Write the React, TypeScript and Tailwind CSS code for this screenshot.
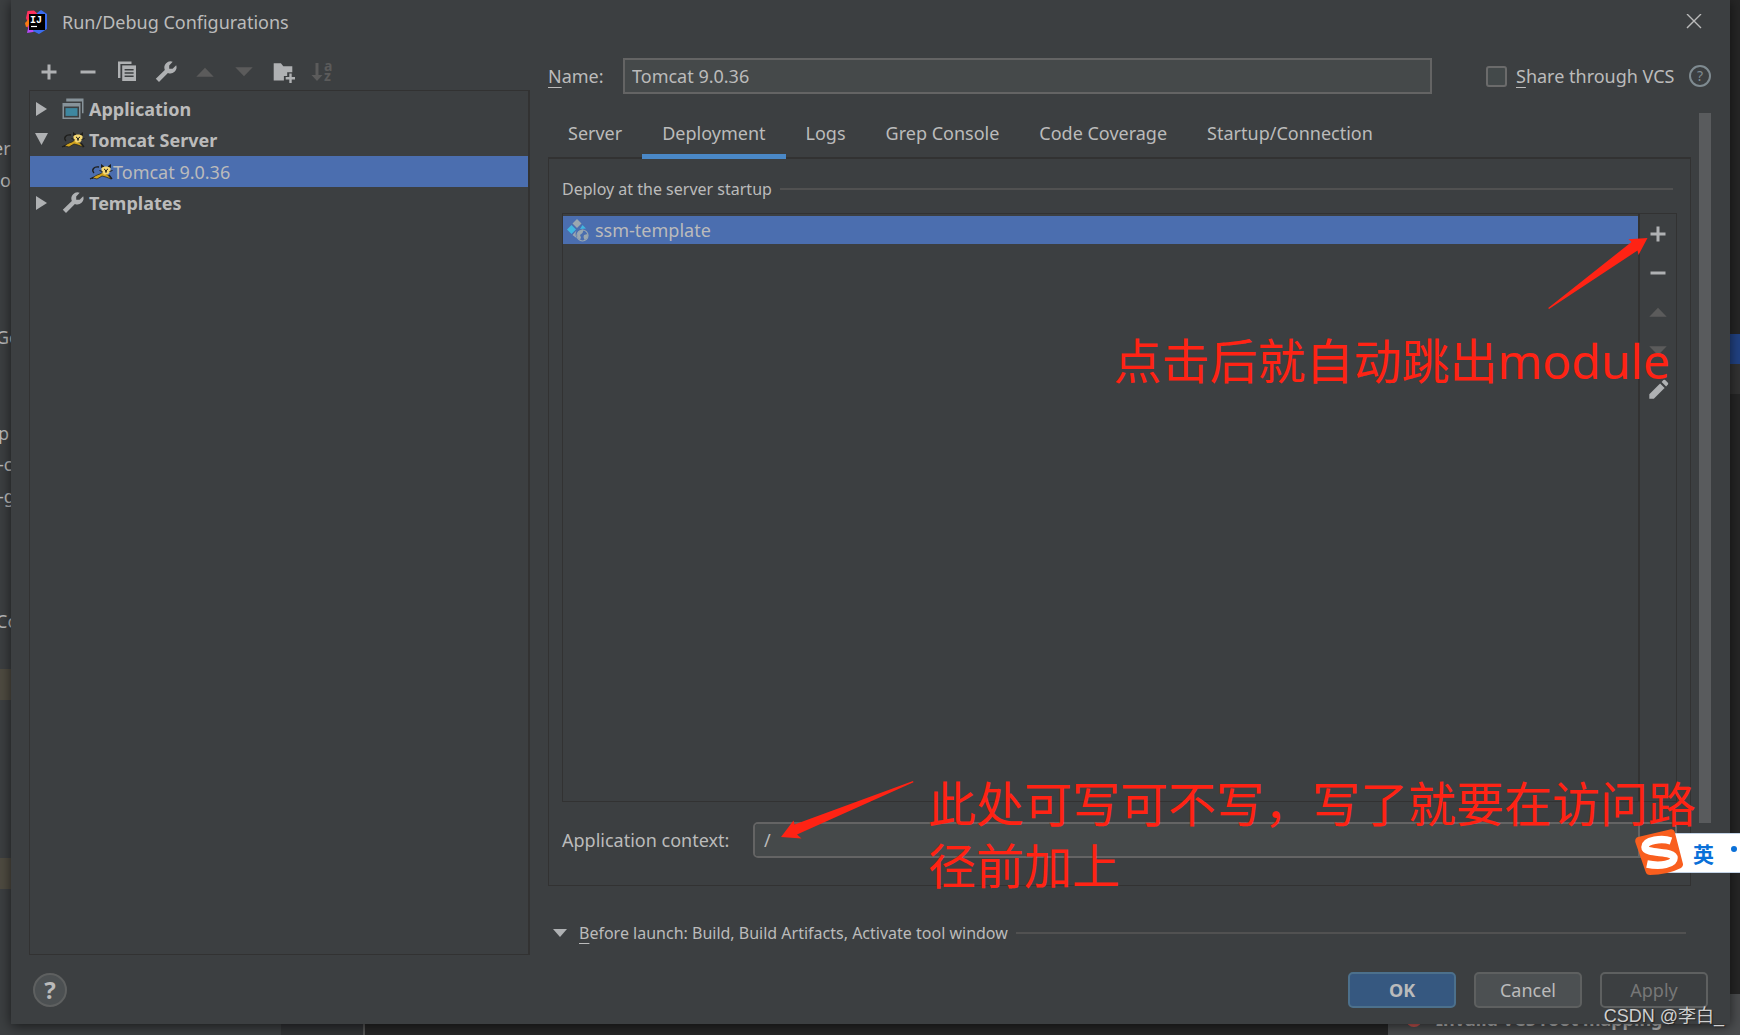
import React from 'react';

type IconProps = { className?: string };

const Plus = () => (
  <svg viewBox="0 0 16 16" className="size-6 fill-[#afb1b3]"><path d="M7 3h2v4h4v2H9v4H7V9H3V7h4z" /></svg>
);

const Minus = () => (
  <svg viewBox="0 0 16 16" className="size-6 fill-[#afb1b3]"><path d="M3 7h10v2H3z" /></svg>
);

const Up = () => (
  <svg viewBox="0 0 16 16" className="size-6 fill-[#5b5b5b]"><path d="M8 5.2l5.8 6H2.2z" /></svg>
);

const Down = () => (
  <svg viewBox="0 0 16 16" className="size-6 fill-[#5b5b5b]"><path d="M8 10.8l5.8-6H2.2z" /></svg>
);

const Copy = () => (
  <svg viewBox="0 0 16 16" className="size-6">
    <path d="M2 1h9v1.600H3.600V12H2z" fill="#afb1b3" />
    <path d="M4.800 3.600H14V14H4.800z" fill="#afb1b3" />
    <path d="M6.400 6h6v1h-6zM6.400 8.200h6v1h-6zM6.400 10.400h6v1h-6z" fill="#3c3f41" />
  </svg>
);

const Wrench = ({ className = "" }: IconProps) => (
  <svg viewBox="0 0 24 24" className={`size-6 shrink-0 fill-[#afb1b3] ${className}`}>
    <path d="M15.2 5.6v3.2h3.4l3.6-3.5a6.2 6.2 0 0 1-8.3 7.7L5 22l-3.2-3.2 9-8.9a6.2 6.2 0 0 1 7.9-8.1z" />
  </svg>
);

const FolderPlus = () => (
  <svg viewBox="0 0 16 16" className="size-6 fill-[#afb1b3]">
    <path d="M1.8 2.2h4.8l1.6 2h6v4h-3.400v2.400H8.600v3H1.800z" />
    <path d="M12.200 9h1.600v2.400h2.200v1.600h-2.200v2.400h-1.600V13H9.800v-1.600h2.400z" />
  </svg>
);

const SortAz = () => (
  <svg viewBox="0 0 24 24" className="size-6 fill-[#5b5b5b]">
    <path d="M5.500 3h3v12h4L7 21l-5.500-6h4z" />
    <text x="14" y="11" fontSize="14" fontWeight="700" fontFamily="Noto Sans">a</text>
    <text x="14" y="21" fontSize="14" fontWeight="700" fontFamily="Noto Sans">z</text>
  </svg>
);

const Pencil = () => (
  <svg viewBox="0 0 16 16" className="size-6 fill-[#afb1b3]">
    <path d="M2.200 10.800l7.200-7.200 3 3-7.200 7.200H2.200z" />
    <path d="M10.400 2.600l1.200-1.200q.6-.5 1.200 0l1.800 1.800q.5.6 0 1.200l-1.200 1.200z" />
  </svg>
);

const AppIcon = () => (
  <svg viewBox="0 0 16 16" className="size-6 shrink-0">
    <path d="M3.500 1H15v9.800h-1V3H3.500z" fill="#87939a" />
    <path d="M1 4h12v10.600H1zM2 6.400v7.200h10V6.400z" fill="#87939a" fillRule="evenodd" />
    <path d="M3 7.400h8v5.200H3z" fill="#3e87a0" />
  </svg>
);

const Tomcat = () => (
  <svg viewBox="0 0 24 24" className="size-6 shrink-0">
    <path d="M10 7C5 6 2 10 5 13M1 19l4-2M20 15l3 4" fill="none" stroke="#1d1d1b" strokeWidth="1.300" />
    <path d="M3 19c2-3 5-4 8-5l3-2 5 3 3 4-5-2-4-1-5 3-4-1z" fill="#d2a41e" stroke="#1d1d1b" strokeWidth=".7" />
    <path d="M12.500 5l2.500 1.500h4L21.500 5v6L19 14.500h-4L12.500 11z" fill="#f5d873" />
    <path d="M12 4l3.500 2.500L12 8zM22 4l-3.500 2.500L22 8z" fill="#1d1d1b" />
    <path d="M15 9l1.500 1 .5 2.500.5-2.500L19 9M10.500 10.500l3 1M20.500 11.500l3-1" fill="none" stroke="#1d1d1b" strokeWidth="1" />
  </svg>
);

const ArtifactIcon = () => (
  <svg viewBox="0 0 24 24" className="size-6 shrink-0">
    <path d="M11 1l4.500 4.500L11 10 6.500 5.500z" fill="#9aa7b0" />
    <path d="M5.500 7l4.500 4.500L5.500 16 1 11.500z" fill="#40b6e0" />
    <path d="M16.500 7l3.500 3.500-6 .500z" fill="#40b6e0" />
    <path d="M10.500 12.500q-2 4 .5 8L6.500 17z" fill="#9aa7b0" />
    <circle cx="16.500" cy="17.500" r="5.500" fill="none" stroke="#9aa7b0" strokeWidth="1.200" />
    <path d="M11.500 15c2-3 5-3.500 6-3l-1 3-2.500 2 1 2.500-1 2.500c-2-1-3-4-2.500-7zM18 17l3.500-1c1 3-1 5-3 6l-1-3z" fill="#9aa7b0" />
  </svg>
);

const IntellijLogo = () => (
  <svg viewBox="0 0 24 24" className="size-6">
    <path d="M2.500 1L9 .500 14 5 5 21 .500 14l2-2L1 8z" fill="#fe315d" />
    <path d="M0 13l4-4v7l-3 1z" fill="#f97a12" />
    <path d="M2 23l2-9 9 5-5 3z" fill="#b74af7" />
    <path d="M12 3l4-3 6 4v15l-8 5-6-3z" fill="#3b6cf0" />
    <path d="M4 4h16v16H4z" fill="#000" />
    <path d="M6 16.500h6" stroke="#fff" strokeWidth="1.200" />
    <text x="5" y="13" fontSize="10" fontWeight="700" fontFamily="Liberation Mono" fill="#fff">IJ</text>
  </svg>
);

const Triangle = ({ open }: { open?: boolean }) => (
  <svg viewBox="0 0 14 14" className="size-[14px] shrink-0 fill-[#afb1b3]">
    <path d={open ? "M0 0h13L6.500 12z" : "M1 0l11 7-11 7z"} />
  </svg>
);

const toolbar = [
  { label: "Add", icon: <Plus /> },
  { label: "Remove", icon: <Minus /> },
  { label: "Copy", icon: <Copy /> },
  { label: "Edit templates", icon: <Wrench /> },
  { label: "Move up", icon: <Up /> },
  { label: "Move down", icon: <Down /> },
  { label: "New folder", icon: <FolderPlus /> },
  { label: "Sort", icon: <SortAz /> }
];

const artifactActions = [
  { label: "Add artifact", icon: <Plus /> },
  { label: "Remove artifact", icon: <Minus /> },
  { label: "Artifact up", icon: <Up /> },
  { label: "Artifact down", icon: <Down /> },
  { label: "Edit artifact", icon: <Pencil /> }
];

const tabs = ["Server", "Deployment", "Logs", "Grep Console", "Code Coverage", "Startup/Connection"];

// slivers of the IDE window that stay visible around the dialog
const Backdrop = () => (
  <div className="absolute inset-0 overflow-hidden bg-[#262626]">
    <div className="absolute inset-y-0 left-0 w-[281px] bg-[#3c3f41]">
      <span className="absolute top-[136px] -left-[7px]">er</span>
      <span className="absolute top-[168px] left-0">o</span>
      <span className="absolute top-[325px] -left-[4px]">Ge</span>
      <span className="absolute top-[421px] -left-[2px]">p</span>
      <span className="absolute top-[452px] -left-[2px]">-c</span>
      <span className="absolute top-[484px] -left-[2px]">-g</span>
      <span className="absolute top-[609px] -left-[4px]">Co</span>
      <div className="absolute top-[669px] h-[31px] w-full bg-[#4f4b41]" />
      <div className="absolute top-[858px] h-[31px] w-full bg-[#4f4b41]" />
    </div>
    <div className="absolute inset-y-0 left-[281px] w-[84px] border-r-2 border-[#555555] bg-[#313335]" />
    <div className="absolute top-[334px] right-0 h-[30px] w-4 bg-[#214283]" />
    <div className="absolute top-[364px] right-0 h-[30px] w-4 bg-[#323232]" />
    <div className="absolute right-0 bottom-0 h-[41px] w-[352px] bg-[#4b4d4f]">
      <div className="absolute bottom-2 left-[18px] size-4 rounded-full bg-[#c75450]" />
      <span className="absolute bottom-1 left-12 font-bold">Invalid VCS root mapping</span>
    </div>
  </div>
);

const TreePane = () => (
  <div className="flex w-[501px] shrink-0 flex-col">
    <div className="flex h-[46px] items-center gap-[15px] pt-[10px] pl-2">
      {toolbar.map((item) => (
        <button key={item.label} aria-label={item.label}>{item.icon}</button>
      ))}
    </div>
    <ul className="flex-1 border border-r-2 border-[#323232] pt-[3px]">
      <li className="flex h-[31px] items-center pb-0.5 pl-[5px] font-bold">
        <Triangle /><span className="w-3" /><AppIcon /><span className="pl-1">Application</span>
      </li>
      <li className="flex h-[31px] items-center pb-0.5 pl-[5px] font-bold">
        <Triangle open /><span className="w-3" /><Tomcat /><span className="pl-1">Tomcat Server</span>
      </li>
      <li className="flex h-[31px] items-center bg-[#4b6eaf] pl-[59px]">
        <Tomcat /><span>Tomcat 9.0.36</span>
      </li>
      <li className="flex h-[31px] items-center pl-[5px] font-bold">
        <Triangle /><span className="w-3" /><Wrench /><span className="pl-1">Templates</span>
      </li>
    </ul>
  </div>
);

const NameRow = () => (
  <div className="flex h-9 items-center">
    <label htmlFor="name" className="w-[75px] shrink-0"><u className="underline-offset-4">N</u>ame:</label>
    <input
      id="name"
      defaultValue="Tomcat 9.0.36"
      className="h-9 min-w-0 flex-1 border-2 border-[#646464] bg-[#45494a] px-[7px] outline-none"
    />
    <input
      id="share"
      type="checkbox"
      className="ml-[54px] size-[21px] appearance-none rounded-[3px] border-2 border-[#6b6b6b] bg-[#43494a]"
    />
    <label htmlFor="share" className="w-[174px] pl-[9px] whitespace-nowrap"><u className="underline-offset-4">S</u>hare through VCS</label>
    <button
      aria-label="Help on sharing"
      className="ml-[8px] flex size-[22px] items-center justify-center rounded-full border-2 border-[#7f8b91] text-sm text-[#7f8b91]"
    >
      ?
    </button>
  </div>
);

const Deployment = () => (
  <div className="flex flex-1 flex-col border border-t-2 border-[#323232] px-[13px] pt-[18px] pb-[27px]">
    <div className="mr-1 flex h-6 items-center gap-2 text-[16px]">
      Deploy at the server startup
      <div className="h-0.5 flex-1 bg-[#515151]" />
    </div>
    <div className="relative mt-3 flex flex-1 border border-[#323232]">
      <ul className="flex-1 border-r-2 border-[#323232] pt-[2px]">
        <li className="flex h-7 items-center gap-[5px] bg-[#4b6eaf] pl-[3px]">
          <ArtifactIcon />ssm-template
        </li>
      </ul>
      <div className="flex w-[36px] flex-col items-center gap-[15px] pt-2">
        {artifactActions.map((item) => (
          <button key={item.label} aria-label={item.label}>{item.icon}</button>
        ))}
      </div>
      <svg viewBox="0 0 100 72" className="absolute top-[23px] right-[28px] h-[72px] w-[100px] fill-[#ff2314]">
        <path d="M99.500 1L90.500 18l-1-4.500L1 72l-.800-1L83.500 5l-3-2.700z" />
      </svg>
      <p className="absolute top-[116px] right-[6px] font-['Noto_Sans','Noto_Sans_CJK_SC',sans-serif] text-[48px] leading-[62px] whitespace-nowrap text-[#ff2314]">
        点击后就自动跳出module
      </p>
    </div>
    <div className="relative mt-5 flex h-9 items-center">
      <label htmlFor="context" className="w-[191px] shrink-0">Application context:</label>
      <div className="flex h-9 flex-1 overflow-hidden rounded-[5px] border-2 border-[#646464]">
        <input id="context" defaultValue="/" className="min-w-0 flex-1 bg-[#45494a] px-[9px] outline-none" />
        <button aria-label="Show contexts" className="w-[37px] border-l-2 border-[#646464]" />
      </div>
      <svg viewBox="0 0 134 60" className="absolute -top-[42px] left-[218px] h-[60px] w-[134px] fill-[#ff2314]">
        <path d="M1 57L13.500 40.500l1 4L133 1l.500 1.200L17 54.500l4.500 4z" />
      </svg>
      <p className="absolute -top-[52px] left-[366px] w-[780px] font-['Noto_Sans_CJK_SC',sans-serif] text-[48px] leading-[62px] text-[#ff2314]">
        此处可写可不写，写了就要在访问路<br />径前加上
      </p>
    </div>
  </div>
);

const ImeBar = () => (
  <div className="absolute top-[829px] right-0 flex h-[48px] w-[105px] items-center">
    <div className="ml-[30px] flex h-[40px] flex-1 items-center border-y border-[#c3d3e6] bg-white pl-[28px] font-['Noto_Sans_CJK_SC',sans-serif] text-[21px] leading-none font-bold text-[#0a70d8]">
      英
      <span className="ml-[17px] size-[6px] -translate-y-1 rounded-full bg-[#0a70d8]" />
    </div>
    <svg viewBox="0 0 48 48" className="absolute left-0 size-12">
      <path d="M3 8L36 .300q3-.300 3.700 2.500L48 35q.300 2.500-2 4-14 7-31 7-3.500 0-4.300-3L.300 13q-.500-4 2.700-5z" fill="#f95e1e" />
      <path d="M36 12c-9-3-26-1-26 6 0 8 29 3 29 11 0 6-13 9-27 6" fill="none" stroke="#fff" strokeWidth="7.500" />
    </svg>
  </div>
);

const App = () => {
  return (
    <div className="relative flex h-screen overflow-hidden pr-[10px] pb-[11px] pl-[11px] font-['Noto_Sans',sans-serif] text-[18px] leading-6 text-[#bbbbbb]">
      <Backdrop />

      <div className="relative flex flex-1 flex-col bg-[#3c3f41] shadow-[0_2px_12px_rgba(0,0,0,0.6)]">
        <header className="flex h-11 items-center pr-7 pl-[14px]">
          <IntellijLogo />
          <h1 className="flex-1 pl-[13px]">Run/Debug Configurations</h1>
          <button aria-label="Close">
            <svg viewBox="0 0 16 16" className="size-4" fill="none" stroke="#bbbbbb" strokeWidth="1.400">
              <path d="M1 0l14 14M15 0L1 14" />
            </svg>
          </button>
        </header>

        <main className="flex min-h-0 flex-1 gap-[18px] pr-[19px] pl-[18px]">
          <TreePane />
          <div className="flex min-w-0 flex-1 flex-col pt-[14px]">
            <NameRow />
            <div className="mt-[19px] flex flex-1 gap-2">
              <div className="flex min-w-0 flex-1 flex-col">
                <nav className="flex h-11">
                  {tabs.map((tab) => (
                    <button
                      key={tab}
                      className={`z-10 h-[46px] border-b-[5px] px-5 pb-0.5 ${tab === "Deployment" ? "border-[#4a88c7]" : "border-transparent"}`}
                    >
                      {tab}
                    </button>
                  ))}
                </nav>
                <Deployment />
                <div className="mt-[35px] mr-[5px] mb-[10px] flex h-6 items-center text-[16px]">
                  <svg viewBox="0 0 14 14" className="ml-[5px] size-[14px] fill-[#afb1b3]"><path d="M0 3h14L7 11z" /></svg>
                  <span className="pr-2 pl-3"><u className="underline-offset-4">B</u>efore launch: Build, Build Artifacts, Activate tool window</span>
                  <div className="h-0.5 flex-1 bg-[#515151]" />
                </div>
              </div>
              <div className="w-3">
                <div className="h-[710px] bg-[#595b5d]" />
              </div>
            </div>
          </div>
        </main>

        <footer className="flex h-[69px] items-center gap-[18px] pr-[22px] pl-[22px]">
          <button aria-label="Help" className="flex size-[34px] items-center justify-center rounded-full border-2 border-[#5e6060] bg-[#4c5052] text-2xl font-bold">
            ?
          </button>
          <div className="flex-1" />
          <button className="h-9 w-[108px] rounded-[5px] border-2 border-[#4c708c] bg-[#365880] font-bold">OK</button>
          <button className="h-9 w-[108px] rounded-[5px] border-2 border-[#5e6060] bg-[#4c5052]">Cancel</button>
          <button className="h-9 w-[108px] rounded-[5px] border-2 border-[#5e6060] text-[#777777]">Apply</button>
        </footer>
      </div>

      <ImeBar />
      <span className="absolute right-4 bottom-[7px] font-['Liberation_Sans','Noto_Sans_CJK_SC',sans-serif] text-[18px] text-[#d0d0d0] [text-shadow:1px_1px_1px_#222222]">CSDN @李白_</span>
    </div>
  );
};

export default App;
